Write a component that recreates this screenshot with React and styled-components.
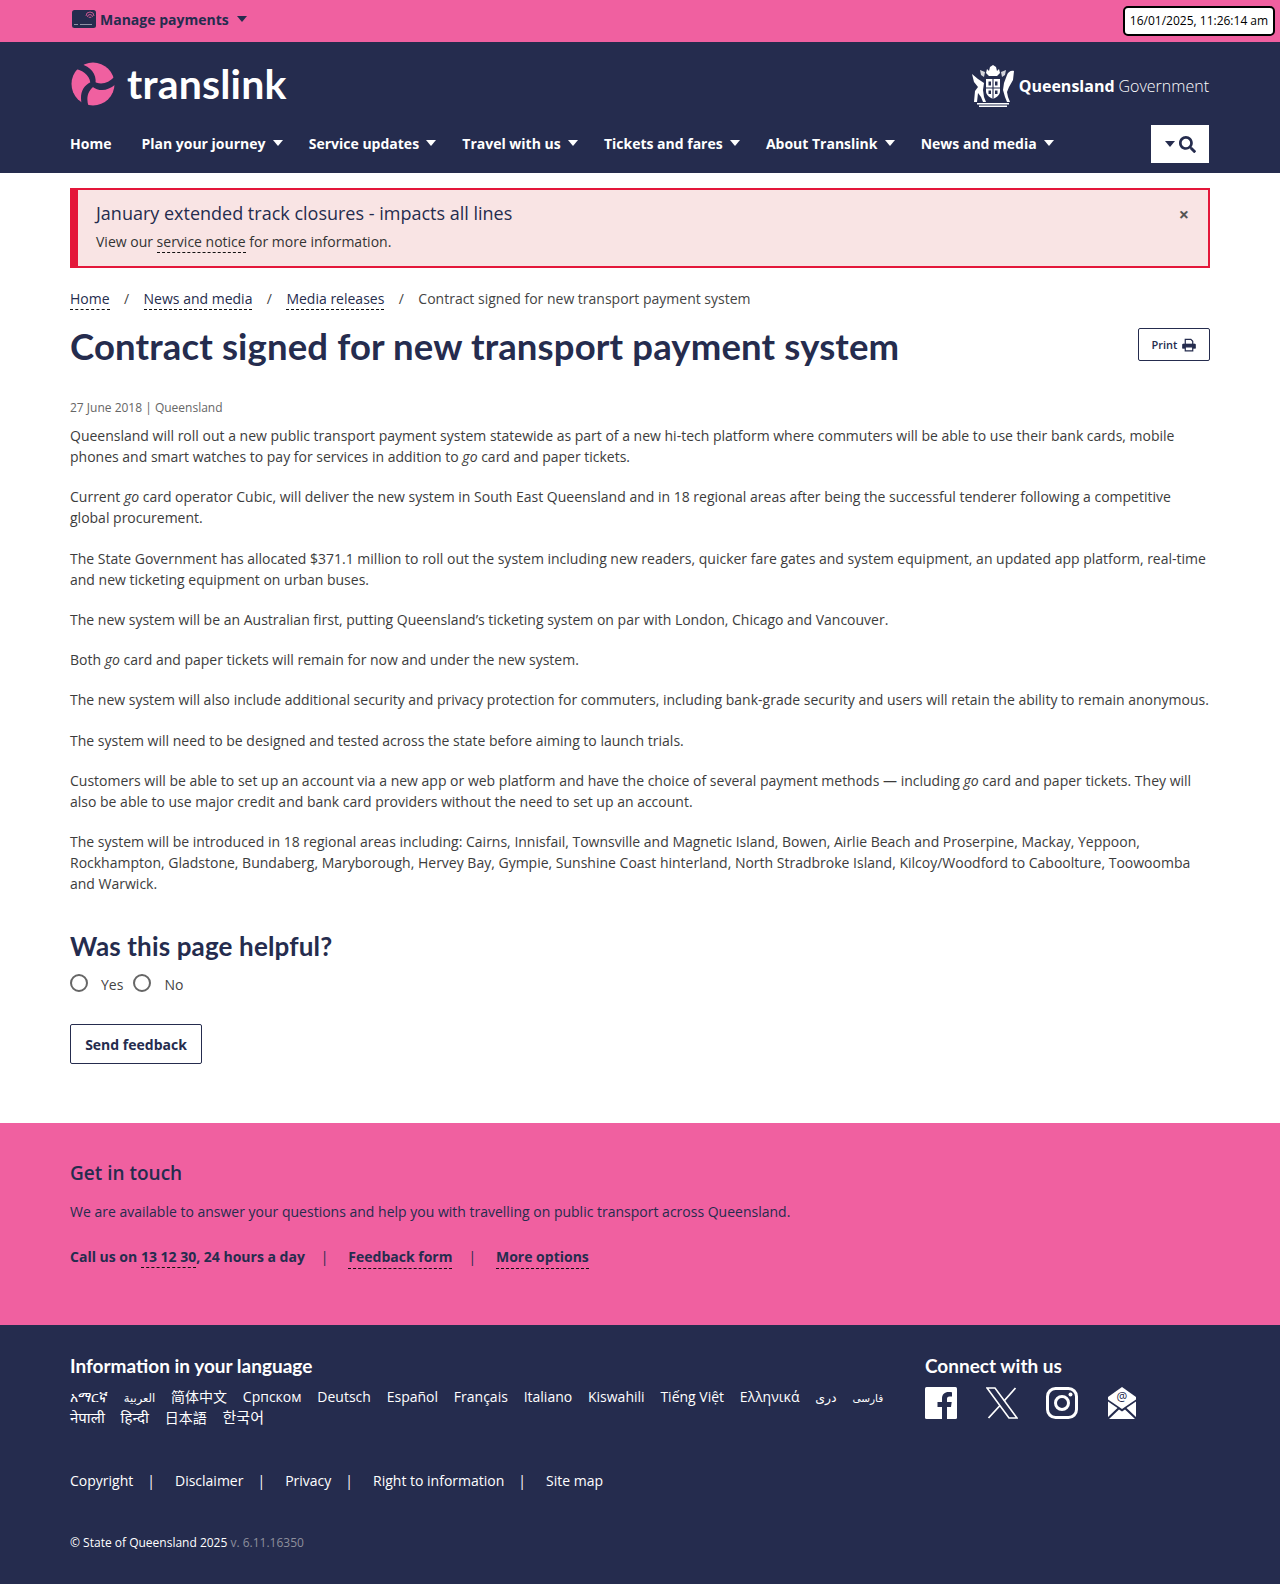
import styled, { createGlobalStyle } from 'styled-components';
import { FaSearch } from 'react-icons/fa';

const PINK = '#f060a0';
const NAVY = '#252c4e';
const TEXT = '#3c3c3c';
const HEADING_FONT = '"Lato", "Open Sans", sans-serif';

const GlobalStyle = createGlobalStyle`
    body {
        margin: 0;
        background: #fff;
        font-family: "Open Sans", "Noto Sans", "DejaVu Sans", "Noto Sans CJK SC", sans-serif;
        font-size: 14px;
        line-height: 21px;
        color: ${TEXT};
    }
    p { margin: 0; }
`;

const Page = styled.div`
    position: relative;
    width: 1280px;
    height: 1584px;
    overflow: hidden;
`;

const Container = styled.div`
    width: 1140px;
    margin: 0 auto;
`;

const TopBar = styled.div`
    height: 42px;
    background: ${PINK};
`;

const PaymentsLink = styled.a`
    display: inline-flex;
    align-items: center;
    height: 38px;
    margin-left: 2px;
    gap: 4px;
    font-weight: 700;
    color: ${NAVY};
`;

const Caret = styled.span`
    display: inline-block;
    width: 0;
    height: 0;
    margin-left: ${({ $gap }) => $gap ?? 7}px;
    border-left: 5px solid transparent;
    border-right: 5px solid transparent;
    border-top: 6px solid ${({ $color }) => $color || '#fff'};
`;

const Timestamp = styled.div`
    position: absolute;
    top: 6px;
    right: 5px;
    box-sizing: border-box;
    width: 152px;
    height: 30px;
    border: 2px solid #000;
    border-radius: 5px;
    background: #fff;
    color: #000;
    font-size: 12px;
    line-height: 26px;
    text-align: center;
    white-space: nowrap;
`;

const Header = styled.header`
    height: 131px;
    background: ${NAVY};
`;

const BrandRow = styled.div`
    display: flex;
    justify-content: space-between;
    align-items: center;
    height: 83px;
`;

const Logo = styled.a`
    display: flex;
    align-items: center;
    gap: 12px;
    margin-left: 1px;
`;

const LogoWord = styled.span`
    font-family: ${HEADING_FONT};
    font-size: 41px;
    line-height: 44px;
    font-weight: 700;
    color: #fff;
    letter-spacing: 0.2px;
`;

const GovLogo = styled.div`
    display: flex;
    align-items: center;
    gap: 4px;
    margin: 5px 1px 0 0;
    color: #fff;
    font-size: 16px;
    white-space: nowrap;
`;

const GovName = styled.span`
    font-weight: 700;
    margin-right: 4px;
`;

const GovWord = styled.span`
    font-weight: 300;
`;

const NavRow = styled.nav`
    display: flex;
    align-items: center;
    justify-content: space-between;
    height: 38px;
`;

const NavList = styled.div`
    display: flex;
    align-items: center;
    margin-top: -2px;
`;

const NavItem = styled.a`
    display: inline-flex;
    align-items: center;
    margin-right: ${({ $space }) => $space}px;
    font-weight: 700;
    color: #fff;
    white-space: nowrap;
`;

const SearchButton = styled.button`
    display: flex;
    align-items: center;
    justify-content: flex-start;
    width: 58px;
    height: 38px;
    margin-right: 1px;
    border: 0;
    padding: 0 0 0 14px;
    background: #fff;
    color: ${NAVY};
    font-size: 17px;
`;

const SearchGlyph = styled(FaSearch)`
    margin-left: 4px;
`;

const Main = styled.main`
    height: 935px;
    padding-top: 15px;
`;

const Alert = styled.div`
    display: flex;
    justify-content: space-between;
    box-sizing: border-box;
    height: 80px;
    padding: 11px 19px 0 18px;
    border: 2px solid #e4173a;
    border-left-width: 8px;
    background: #f9e4e4;
`;

const AlertTitle = styled.div`
    font-size: 18px;
    line-height: 24px;
    margin-bottom: 6px;
    color: ${NAVY};
`;

const AlertText = styled.p`
    color: #333;
`;

const DashedLink = styled.a`
    color: inherit;
    border-bottom: 1px dashed #111;
    padding-bottom: 1px;
`;

const CloseMark = styled.span`
    margin-top: 3px;
    font-size: 18px;
    line-height: 20px;
    font-weight: 700;
    color: #555;
`;

const Breadcrumbs = styled.div`
    display: flex;
    align-items: center;
    margin-top: 20px;
    height: 21px;
    color: #444;
`;

const Crumb = styled.span`
    color: ${NAVY};
`;

const CrumbSlash = styled.span`
    width: 36px;
    text-align: center;
    margin: 0 -1px;
`;

const TitleRow = styled.div`
    display: flex;
    justify-content: space-between;
    align-items: flex-start;
    margin-top: 15px;
`;

const Title = styled.h1`
    margin: 0;
    font-family: ${HEADING_FONT};
    font-size: 36.5px;
    line-height: 44px;
    font-weight: 700;
    letter-spacing: 0.15px;
    color: ${NAVY};
`;

const OutlineButton = styled.button`
    display: inline-flex;
    align-items: center;
    justify-content: center;
    box-sizing: border-box;
    border: 1px solid ${NAVY};
    border-radius: 2px;
    background: #fff;
    color: ${NAVY};
    font-family: "Open Sans", sans-serif;
    font-weight: 700;
    padding: 0;
`;

const PrintButton = styled(OutlineButton)`
    width: 72px;
    height: 33px;
    margin-top: 4px;
    gap: 5px;
    font-size: 11px;
    font-weight: 600;
`;

const FeedbackButton = styled(OutlineButton)`
    width: 132px;
    height: 40px;
    font-size: 14px;
`;

const DateLine = styled.div`
    margin-top: 31px;
    font-size: 12px;
    line-height: 18px;
    color: #666;
`;

const Article = styled.div`
    margin-top: 8px;
`;

const Para = styled.p`
    margin-bottom: 19.25px;
`;

const HelpfulHeading = styled.h2`
    margin: 37px 0 0;
    font-family: ${HEADING_FONT};
    font-size: 26px;
    line-height: 30px;
    font-weight: 700;
    letter-spacing: 0.15px;
    color: ${NAVY};
`;

const RadioRow = styled.div`
    display: flex;
    align-items: center;
    margin-top: 13px;
`;

const RadioMark = styled.span`
    box-sizing: border-box;
    width: 18px;
    height: 18px;
    margin: -3px 13px 0 0;
    border: 2px solid #666;
    border-radius: 50%;
    background: #fff;
`;

const RadioLabel = styled.span`
    margin-right: 10px;
    color: #444;
`;

const FeedbackWrap = styled.div`
    margin-top: 29px;
`;

const TouchBand = styled.section`
    box-sizing: border-box;
    height: 202px;
    padding-top: 37px;
    background: ${PINK};
    color: ${NAVY};
`;

const TouchHeading = styled.h3`
    margin: 0;
    font-size: 19px;
    line-height: 26px;
    font-weight: 600;
`;

const TouchText = styled.p`
    margin-top: 15px;
`;

const TouchLinks = styled.div`
    display: flex;
    margin-top: 24px;
    font-weight: 700;
`;

const TouchSep = styled.span`
    box-sizing: border-box;
    width: 43.5px;
    padding-right: 4px;
    text-align: center;
    font-weight: 400;
`;

const FooterBand = styled.footer`
    box-sizing: border-box;
    height: 259px;
    padding-top: 28px;
    background: ${NAVY};
    color: #fff;
`;

const FooterColumns = styled.div`
    display: flex;
    height: 117px;
`;

const LangColumn = styled.div`
    width: 855px;
`;

const FooterHeading = styled.h4`
    margin: 0 0 8px;
    font-family: ${HEADING_FONT};
    font-size: 19px;
    line-height: 26px;
    font-weight: 700;
`;

const LangList = styled.div`
    display: flex;
    flex-wrap: wrap;
    align-items: baseline;
    column-gap: 15.8px;
    width: 830px;
    line-height: 20px;
`;

const LangLink = styled.a`
    font-size: ${({ $size }) => $size || 14}px;
    line-height: 19px;
`;

const ConnectColumn = styled.div`
    width: 240px;
`;

const SocialRow = styled.div`
    display: flex;
    align-items: center;
    gap: 28.7px;
    margin-top: 1px;
    height: 32px;
`;

const LegalRow = styled.div`
    display: flex;
    align-items: center;
    height: 21px;
    white-space: nowrap;
`;

const LegalSep = styled.span`
    margin: 0 20px 0 14px;
`;

const CopyLine = styled.div`
    margin-top: 43px;
    font-size: 12px;
    line-height: 18px;
`;

const Version = styled.span`
    color: #8d8f9c;
`;

function TranslinkMark() {
    const swoosh = 'M-12 -20 C -3 -17, 4 -11, 2.5 0 L -2.5 2 C -2 -7, -8 -13, -17 -15 Z';
    return (
        <svg width="44" height="44" viewBox="-22 -22 44 44">
            <circle r="21.5" fill={PINK} />
            <path d={swoosh} fill={NAVY} />
            <path d={swoosh} fill={NAVY} transform="rotate(120)" />
            <path d={swoosh} fill={NAVY} transform="rotate(240)" />
        </svg>
    );
}

function CardReaderIcon() {
    return (
        <svg width="24" height="18" viewBox="0 0 24 18">
            <rect width="24" height="18" rx="2.5" fill={NAVY} />
            <path d="M14 6a4 4 0 0 1 8 0M15.5 7a2.5 2.5 0 0 1 5 0M17 8a1 1 0 0 1 2 0" fill="none" stroke={PINK} strokeWidth="0.8" />
            <path d="M2 14.5h4M8 14.5h12" stroke="#8f91a5" strokeWidth="1" />
        </svg>
    );
}

function CrestIcon() {
    return (
        <svg width="44" height="42" viewBox="0 0 44 42" fill="none">
            <path d="M15 8l1-4 2 2 1-4 3-2 3 2 1 4 2-2 1 4-3 3H18z" fill="#fff" />
            <path d="M9 5l5 2-1 5-3-2zM35 5l-5 2 1 5 3-2z" fill="#fff" opacity="0.8" />
            <path d="M15 14h14v12c0 4-3 6-7 8-4-2-7-4-7-8z" fill="#fff" />
            <path d="M22 14v20M15 23h14" stroke={NAVY} strokeWidth="1.1" />
            <path d="M17.5 16.5h2.5v4h-2.5zM24 16.5h2.5v4H24zM17.5 25.5h2.5v3.5h-2.5zM24 25.5h2.5v3.5H24z" fill={NAVY} />
            <path d="M1 9l6 5 6 4-1 7 1 7 2 5h-3l-2-5-3-4-1 9H3l1-11 3-4-4-5z" fill="#fff" />
            <path d="M43 6l-1 9-4 7-2 5 1 5 2 5h-3l-2-5-2-7 1-7 3-8c1-3 4-5 7-4z" fill="#fff" />
            <path d="M6 38h32v1.5H6zM8 40.5h28V42H8z" fill="#fff" />
        </svg>
    );
}

function PrinterIcon() {
    return (
        <svg width="14" height="14" viewBox="0 0 15 14" fill="none" stroke={NAVY}>
            <path d="M3.5 6V1h6l2 2v3" strokeWidth="1.3" />
            <path d="M1 6h13a.6.6 0 0 1 .4.5V10.5H.6V6.5A.6.6 0 0 1 1 6z" fill={NAVY} strokeWidth="0.8" />
            <path d="M3.5 9h8v4.3h-8z" fill="#fff" strokeWidth="1.3" />
        </svg>
    );
}

function FacebookIcon() {
    return (
        <svg width="32" height="32" viewBox="0 0 32 32">
            <rect width="32" height="32" rx="1.5" fill="#fff" />
            <path d="M22 32V20h4l.7-5H22v-3c0-1.500.6-2.500 2.500-2.500H27V5.200C26.300 5.100 25 5 23.500 5 19.800 5 17 7.300 17 11.500V15h-4.500v5H17v12z" fill={NAVY} />
        </svg>
    );
}

function XIcon() {
    return (
        <svg width="32" height="32" viewBox="0 0 32 32" fill="none" stroke="#fff">
            <path d="M1 1h8l22 30h-8z" strokeWidth="1.6" />
            <path d="M29.5 1L18 14M14 18.5L2.5 31" strokeWidth="1.8" />
        </svg>
    );
}

function InstagramIcon() {
    return (
        <svg width="32" height="32" viewBox="0 0 32 32" fill="none" stroke="#fff" strokeWidth="3">
            <rect x="1.5" y="1.5" width="29" height="29" rx="8" />
            <circle cx="16" cy="16" r="6.5" />
            <circle cx="24.5" cy="7.5" r="2" fill="#fff" stroke="none" />
        </svg>
    );
}

function MailIcon() {
    return (
        <svg width="30" height="32" viewBox="0 0 30 32">
            <path d="M15 0L29 10V12.5L15 22 1 12.5V10z" fill="#fff" />
            <path d="M1 14.5L10.5 21 1 30zM29 14.5L19.5 21 29 30zM2 32l10-9.5L15 24.5 18 22.5 28 32z" fill="#fff" />
            <text x="15" y="14" textAnchor="middle" fontSize="12" fontFamily="Open Sans, sans-serif" fill={NAVY}>@</text>
        </svg>
    );
}

const navItems = [
    { label: 'Plan your journey', space: 26.2 },
    { label: 'Service updates', space: 26.2 },
    { label: 'Travel with us', space: 26.2 },
    { label: 'Tickets and fares', space: 26.2 },
    { label: 'About Translink', space: 26.2 },
    { label: 'News and media', space: 0 },
];

const languages = [
    { name: 'አማርኛ' },
    { name: 'العربية', size: 11.5 },
    { name: '简体中文' },
    { name: 'Српском' },
    { name: 'Deutsch' },
    { name: 'Español' },
    { name: 'Français' },
    { name: 'Italiano' },
    { name: 'Kiswahili' },
    { name: 'Tiếng Việt' },
    { name: 'Ελληνικά' },
    { name: 'دری', size: 12.5 },
    { name: 'فارسی', size: 10.5 },
    { name: 'नेपाली', size: 15 },
    { name: 'हिन्दी', size: 15 },
    { name: '日本語' },
    { name: '한국어', size: 15 },
];
const legalLinks = ['Copyright', 'Disclaimer', 'Privacy', 'Right to information'];

export default function App() {
    return (
        <Page>
            <GlobalStyle />
            <TopBar>
                <Container>
                    <PaymentsLink>
                        <CardReaderIcon />
                        Manage payments
                        <Caret $color={NAVY} $gap={4} />
                    </PaymentsLink>
                </Container>
            </TopBar>
            <Timestamp>16/01/2025, 11:26:14 am</Timestamp>
            <Header>
                <Container>
                    <BrandRow>
                        <Logo>
                            <TranslinkMark />
                            <LogoWord>translink</LogoWord>
                        </Logo>
                        <GovLogo>
                            <CrestIcon />
                            <span>
                                <GovName>Queensland</GovName>
                                <GovWord>Government</GovWord>
                            </span>
                        </GovLogo>
                    </BrandRow>
                    <NavRow>
                        <NavList>
                            <NavItem $space={30}>Home</NavItem>
                            {navItems.map((item) => (
                                <NavItem key={item.label} $space={item.space}>
                                    {item.label}
                                    <Caret />
                                </NavItem>
                            ))}
                        </NavList>
                        <SearchButton aria-label="Search">
                            <Caret $color={NAVY} $gap={0} />
                            <SearchGlyph />
                        </SearchButton>
                    </NavRow>
                </Container>
            </Header>
            <Main>
                <Container>
                    <Alert>
                        <div>
                            <AlertTitle>January extended track closures - impacts all lines</AlertTitle>
                            <AlertText>
                                View our <DashedLink>service notice</DashedLink> for more information.
                            </AlertText>
                        </div>
                        <CloseMark>×</CloseMark>
                    </Alert>
                    <Breadcrumbs>
                        <Crumb><DashedLink>Home</DashedLink></Crumb>
                        <CrumbSlash>/</CrumbSlash>
                        <Crumb><DashedLink>News and media</DashedLink></Crumb>
                        <CrumbSlash>/</CrumbSlash>
                        <Crumb><DashedLink>Media releases</DashedLink></Crumb>
                        <CrumbSlash>/</CrumbSlash>
                        <span>Contract signed for new transport payment system</span>
                    </Breadcrumbs>
                    <TitleRow>
                        <Title>Contract signed for new transport payment system</Title>
                        <PrintButton>Print <PrinterIcon /></PrintButton>
                    </TitleRow>
                    <DateLine>27 June 2018 | Queensland</DateLine>
                    <Article>
                        <Para>Queensland will roll out a new public transport payment system statewide as part of a new hi-tech platform where commuters will be able to use their bank cards, mobile phones and smart watches to pay for services in addition to <em>go</em> card and paper tickets.</Para>
                        <Para>Current <em>go</em> card operator Cubic, will deliver the new system in South East Queensland and in 18 regional areas after being the successful tenderer following a competitive global procurement.</Para>
                        <Para>The State Government has allocated $371.1 million to roll out the system including new readers, quicker fare gates and system equipment, an updated app platform, real-time and new ticketing equipment on urban buses.</Para>
                        <Para>The new system will be an Australian first, putting Queensland’s ticketing system on par with London, Chicago and Vancouver.</Para>
                        <Para>Both <em>go</em> card and paper tickets will remain for now and under the new system.</Para>
                        <Para>The new system will also include additional security and privacy protection for commuters, including bank-grade security and users will retain the ability to remain anonymous.</Para>
                        <Para>The system will need to be designed and tested across the state before aiming to launch trials.</Para>
                        <Para>Customers will be able to set up an account via a new app or web platform and have the choice of several payment methods — including <em>go</em> card and paper tickets. They will also be able to use major credit and bank card providers without the need to set up an account.</Para>
                        <Para>The system will be introduced in 18 regional areas including: Cairns, Innisfail, Townsville and Magnetic Island, Bowen, Airlie Beach and Proserpine, Mackay, Yeppoon, Rockhampton, Gladstone, Bundaberg, Maryborough, Hervey Bay, Gympie, Sunshine Coast hinterland, North Stradbroke Island, Kilcoy/Woodford to Caboolture, Toowoomba and Warwick.</Para>
                    </Article>
                    <HelpfulHeading>Was this page helpful?</HelpfulHeading>
                    <RadioRow>
                        <RadioMark />
                        <RadioLabel>Yes</RadioLabel>
                        <RadioMark />
                        <RadioLabel>No</RadioLabel>
                    </RadioRow>
                    <FeedbackWrap>
                        <FeedbackButton>Send feedback</FeedbackButton>
                    </FeedbackWrap>
                </Container>
            </Main>
            <TouchBand>
                <Container>
                    <TouchHeading>Get in touch</TouchHeading>
                    <TouchText>We are available to answer your questions and help you with travelling on public transport across Queensland.</TouchText>
                    <TouchLinks>
                        <span>Call us on <DashedLink>13 12 30</DashedLink>, 24 hours a day</span>
                        <TouchSep>|</TouchSep>
                        <DashedLink>Feedback form</DashedLink>
                        <TouchSep>|</TouchSep>
                        <DashedLink>More options</DashedLink>
                    </TouchLinks>
                </Container>
            </TouchBand>
            <FooterBand>
                <Container>
                    <FooterColumns>
                        <LangColumn>
                            <FooterHeading>Information in your language</FooterHeading>
                            <LangList>
                                {languages.map((lang) => <LangLink key={lang.name} $size={lang.size}>{lang.name}</LangLink>)}
                            </LangList>
                        </LangColumn>
                        <ConnectColumn>
                            <FooterHeading>Connect with us</FooterHeading>
                            <SocialRow>
                                <FacebookIcon />
                                <XIcon />
                                <InstagramIcon />
                                <MailIcon />
                            </SocialRow>
                        </ConnectColumn>
                    </FooterColumns>
                    <LegalRow>
                        {legalLinks.map((link) => (
                            <span key={link}>
                                {link}
                                <LegalSep>|</LegalSep>
                            </span>
                        ))}
                        <span>Site map</span>
                    </LegalRow>
                    <CopyLine>© State of Queensland 2025 <Version>v. 6.11.16350</Version></CopyLine>
                </Container>
            </FooterBand>
        </Page>
    );
}
